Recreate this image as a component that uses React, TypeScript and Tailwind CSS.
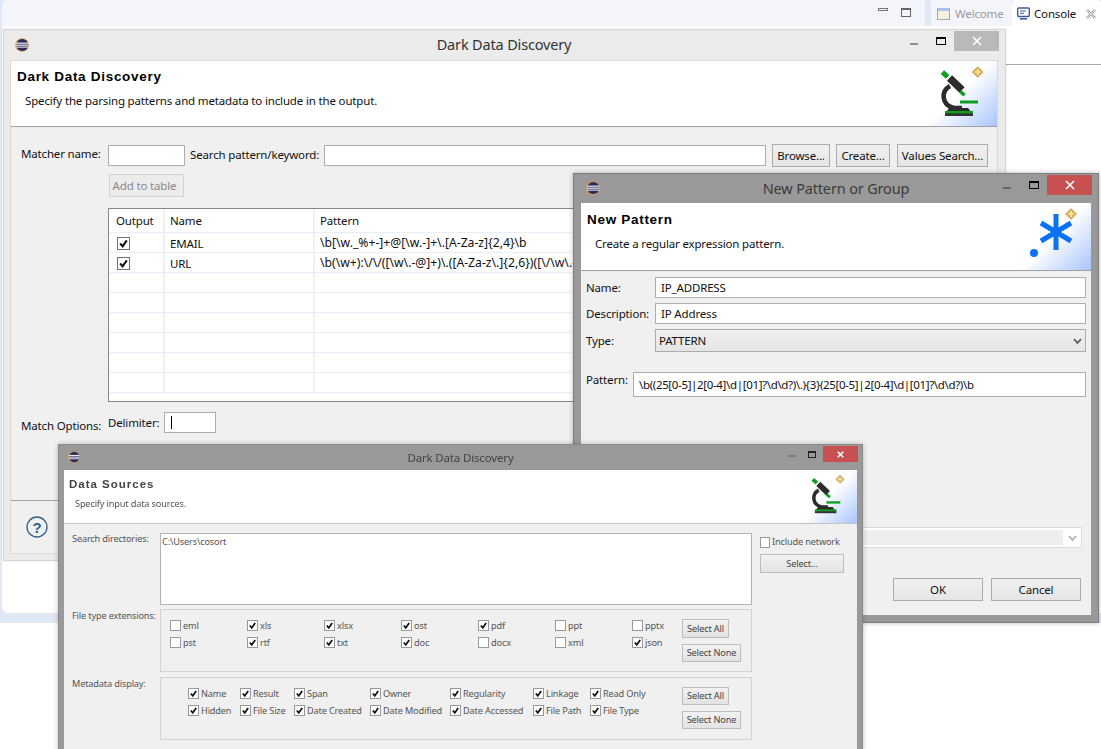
import React from "react";

const Eclipse = ({ s = 14 }: { s?: number }) => (
  <svg width={s} height={s} viewBox="0 0 14 14">
    <circle cx="7" cy="7" r="6.8" fill="#e8973a" />
    <circle cx="7.3" cy="7" r="6.1" fill="#2c2a5e" />
    <rect x="1" y="4.6" width="12.4" height="1.1" fill="#fff" />
    <rect x="0.9" y="6.6" width="12.6" height="1.1" fill="#fff" />
    <rect x="1.2" y="8.6" width="12" height="1" fill="#fff" />
  </svg>
);

const Diamond = ({ x, y }: { x: number; y: number }) => (
  <g transform={`translate(${x} ${y})`}>
    <path d="M0 -5.5 L5.5 0 L0 5.5 L-5.5 0 Z" fill="#d9b55a" stroke="#b8923c" strokeWidth="0.6" />
    <path d="M0 -3 V3 M-3 0 H3" stroke="#fff3c8" strokeWidth="1.2" />
  </g>
);

const Microscope = ({ className }: { className: string }) => (
  <svg className={className} viewBox="0 0 48 52">
    <rect x="1.5" y="5" width="7" height="5" transform="rotate(42 5 7.5)" fill="#0f9e1f" />
    <path d="M9.5 11 L22 23" stroke="#2c2c2c" strokeWidth="7.5" />
    <rect x="19.5" y="24.5" width="6" height="3.6" transform="rotate(42 22.5 26)" fill="#0f9e1f" />
    <path d="M10 19 C1 24 1 38 14 41 L22 41" fill="none" stroke="#2c2c2c" strokeWidth="4.6" />
    <rect x="20" y="33.5" width="18" height="3" fill="#0f9e1f" />
    <path d="M9 41 H28 L33 47 H5 Z" fill="#2c2c2c" />
    <rect x="5" y="44" width="28" height="2.6" fill="#0f9e1f" />
    <rect x="5" y="46.6" width="28" height="2.4" fill="#333" />
    <Diamond x={37.7} y={5} />
  </svg>
);

const Asterisk = () => (
  <svg className="absolute right-[10px] top-0 w-[70px] h-[66px]" viewBox="0 0 70 66">
    <path d="M45 11 V47 M30 20 L60 38 M60 20 L30 38" stroke="#0a72f5" strokeWidth="5" fill="none" />
    <circle cx="23" cy="50" r="4" fill="#0a72f5" />
    <Diamond x={60} y={11} />
  </svg>
);

const Corner = ({ w }: { w: string }) => (
  <div className={`absolute right-0 bottom-0 top-0 ${w} bg-[linear-gradient(135deg,#ffffff_50%,#a9c5fb_100%)]`} />
);

const Controls = ({ active, red }: { active?: boolean; red?: boolean }) => (
  <div className="absolute right-[-1px] top-[1px] flex items-start">
    <div className={`mt-[12px] mr-[18px] w-[8px] h-[2px] ${active ? "bg-[#8d8d8d]" : "bg-[#666]"}`} />
    <div className="mt-[6px] mr-[8px] w-[10px] h-[8px] border border-black border-t-2" />
    <div
      className={`w-[45px] h-[20px] flex items-center justify-center ${red ? "bg-[#c75050]" : "bg-[#b9b9b9]"}`}
    >
      <svg width="10" height="10" viewBox="0 0 10 10">
        <path d="M1 1 L9 9 M9 1 L1 9" stroke="#fff" strokeWidth="1.6" />
      </svg>
    </div>
  </div>
);

const Btn = ({ className, children }: { className: string; children: React.ReactNode }) => (
  <div
    className={`flex items-center justify-center border border-[#acacac] bg-[linear-gradient(#f0f0f0,#e5e5e5)] text-[11.5px] text-[#111] whitespace-nowrap ${className}`}
  >
    {children}
  </div>
);

const Cb = ({ on, size = "w-[13px] h-[13px]", tone = "border-[#707070]" }: { on?: boolean; size?: string; tone?: string }) => (
  <div className={`${size} shrink-0 border ${tone} bg-white flex items-center justify-center`}>
    {on && (
      <svg viewBox="0 0 10 10" className="w-full h-full">
        <path d="M2 5 L4.2 7.6 L8 2.2" fill="none" stroke="#111" strokeWidth="1.9" />
      </svg>
    )}
  </div>
);

const Input = ({ className, children }: { className: string; children?: React.ReactNode }) => (
  <div className={`flex items-center bg-white border border-[#abadb3] text-[11.5px] text-[#111] ${className}`}>
    {children}
  </div>
);

const SmallCheck = ({ on, label }: { on?: boolean; label: string }) => (
  <div className="flex items-center h-[17px] gap-[2px] whitespace-nowrap">
    <Cb on={on} size="w-[11px] h-[11px]" tone="border-[#999]" />
    <span>{label}</span>
  </div>
);

const SmallBtn = ({ className, children }: { className: string; children: React.ReactNode }) => (
  <div
    className={`flex items-center justify-center border border-[#bdbdbd] bg-[linear-gradient(#f2f2f2,#e3e3e3)] text-[9.2px] text-[#444] whitespace-nowrap ${className}`}
  >
    {children}
  </div>
);

const rows = [
  { out: true, name: "EMAIL", pat: "\\b[\\w._%+-]+@[\\w.-]+\\.[A-Za-z]{2,4}\\b" },
  { out: true, name: "URL", pat: "\\b(\\w+):\\/\\/([\\w\\.-@]+)\\.([A-Za-z\\.]{2,6})([\\/\\w\\.-]*)*\\/?\\b" },
  {},
  {},
  {},
  {},
  {},
  {},
] as { out?: boolean; name?: string; pat?: string }[];

function MainDialog() {
  return (
    <div className="absolute left-[3px] top-[29px] w-[1003px] h-[532px] bg-[#ebebeb] border border-[#d6d6d6] pl-[6px] pr-[7px] pb-[6px] flex flex-col shadow-[0_0_3px_rgba(0,0,0,0.1)]">
      <div className="relative h-[30px] shrink-0 flex items-center justify-center text-[14.5px] text-[#333]">
        <div className="absolute left-[5px] top-[8px]">
          <Eclipse />
        </div>
        <span>Dark Data Discovery</span>
        <Controls active />
      </div>
      <div className="flex-1 flex flex-col bg-[#f0f0f0] border border-[#d9d9d9] min-h-0">
        <div className="relative h-[66px] shrink-0 bg-white border-b border-[#a0a0a0] pl-[6px] pt-[7px]">
          <Corner w="w-[76px]" />
          <Microscope className="absolute right-[9px] top-[6px] w-[48px] h-[52px]" />
          <div className="relative font-bold text-[13.5px] tracking-[0.7px] text-black font-['Liberation_Sans',sans-serif] leading-[18px]">
            Dark Data Discovery
          </div>
          <div className="relative mt-[7px] ml-[8px] text-[11.5px] leading-[16px] text-[#111]">
            Specify the parsing patterns and metadata to include in the output.
          </div>
        </div>
        <div className="pl-[10px] pt-[17px] flex items-start h-[23px] box-content text-[11.5px]">
          <span className="w-[87px] leading-[18px] mt-[1px] text-[#111] whitespace-nowrap">Matcher name:</span>
          <Input className="w-[77px] h-[21px] mt-[1px]" />
          <span className="ml-[5px] w-[134px] leading-[20px] mt-[1px] text-[#111] whitespace-nowrap">
            Search pattern/keyword:
          </span>
          <Input className="w-[442px] h-[21px] mt-[1px]" />
          <Btn className="ml-[6px] w-[58px] h-[23px]">Browse...</Btn>
          <Btn className="ml-[6px] w-[54px] h-[23px]">Create...</Btn>
          <Btn className="ml-[7px] w-[91px] h-[23px]">Values Search...</Btn>
        </div>
        <div className="ml-[98px] mt-[7px] w-[75px] h-[23px] flex items-center justify-center pr-[4px] border border-[#d2d2d2] bg-[#ececec] text-[11.5px] text-[#8a8a8a] whitespace-nowrap">
          Add to table
        </div>
        <div className="ml-[97px] mt-[11px] w-[880px] h-[194px] bg-white border border-[#828790] overflow-hidden text-[11.5px] text-[#111]">
          <div className="flex h-[24px] items-center border-b border-[#e8eef6]">
            <span className="w-[56px] pl-[7px] border-r-2 border-[#eef2f8] leading-[27px]">Output</span>
            <span className="w-[150px] pl-[5px] border-r-2 border-[#eef2f8] leading-[27px]">Name</span>
            <span className="pl-[5px] leading-[27px]">Pattern</span>
          </div>
          {rows.map((r, i) => (
            <div key={i} className="flex h-[20px] items-center border-b border-[#e8eef6]">
              <div className="w-[56px] h-full pl-[8px] pt-[1px] border-r-2 border-[#eef2f8] flex items-center">
                {r.name && <Cb on={r.out} />}
              </div>
              <div className="w-[150px] h-full pl-[5px] border-r-2 border-[#eef2f8] leading-[21px]">{r.name}</div>
              <div className="pl-[5px] leading-[21px] whitespace-nowrap text-[12.2px] tracking-normal">{r.pat}</div>
            </div>
          ))}
        </div>
        <div className="pl-[10px] mt-[10px] flex items-start h-[22px] text-[11.5px] text-[#111]">
          <span className="w-[87px] mt-[6px] leading-[16px] whitespace-nowrap">Match Options:</span>
          <span className="w-[56px] mt-[1px] leading-[20px]">Delimiter:</span>
          <Input className="w-[52px] h-[21px] pl-[6px]">
            <span className="w-[1px] h-[13px] bg-black" />
          </Input>
        </div>
        <div className="mt-auto h-[53px] border-t border-[#a0a0a0] pl-[15px] pt-[15px]">
          <svg width="22" height="22" viewBox="0 0 22 22">
            <circle cx="11" cy="11" r="10" fill="none" stroke="#2f5f8f" strokeWidth="1.3" />
            <text
              x="11"
              y="16.5"
              textAnchor="middle"
              fontSize="15"
              fontWeight="700"
              fontFamily="Liberation Sans"
              fill="#2f5f8f"
            >
              ?
            </text>
          </svg>
        </div>
      </div>
    </div>
  );
}

function PatternDialog() {
  return (
    <div className="absolute left-[573px] top-[173px] w-[526px] h-[450px] bg-[#999] border border-[#7e7e7e] px-[7px] pb-[7px] flex flex-col shadow-[0_0_5px_rgba(0,0,0,0.25)]">
      <div className="relative h-[29px] shrink-0 flex items-center justify-center text-[14.5px] text-[#3c3c3c]">
        <div className="absolute left-[5px] top-[7px]">
          <Eclipse />
        </div>
        <span>New Pattern or Group</span>
        <Controls red />
      </div>
      <div className="flex-1 flex flex-col bg-[#f0f0f0] min-h-0 text-[11.5px] text-[#111]">
        <div className="relative h-[68px] shrink-0 bg-white border-b border-[#a0a0a0] pl-[6px] pt-[8px]">
          <Corner w="w-[76px]" />
          <Asterisk />
          <div className="relative font-bold text-[13.5px] tracking-[0.7px] text-black font-['Liberation_Sans',sans-serif] leading-[18px]">
            New Pattern
          </div>
          <div className="relative mt-[7px] ml-[8px] leading-[16px]">Create a regular expression pattern.</div>
        </div>
        <div className="pl-[5px] pr-[5px] pt-[6px] flex flex-col">
          <div className="flex items-center h-[21px]">
            <span className="w-[69px]">Name:</span>
            <Input className="flex-1 h-[21px] pl-[5px]">IP_ADDRESS</Input>
          </div>
          <div className="flex items-center h-[21px] mt-[5px]">
            <span className="w-[69px]">Description:</span>
            <Input className="flex-1 h-[21px] pl-[5px]">IP Address</Input>
          </div>
          <div className="flex items-center h-[23px] mt-[5px]">
            <span className="w-[69px]">Type:</span>
            <div className="relative flex-1 h-[23px] flex items-center pl-[3px] border border-[#acacac] bg-[linear-gradient(#f0f0f0,#e5e5e5)]">
              PATTERN
              <svg className="absolute right-[3px] top-[7px]" width="9" height="8" viewBox="0 0 9 8">
                <path d="M1 2 L4.5 6 L8 2" fill="none" stroke="#555" strokeWidth="1.8" />
              </svg>
            </div>
          </div>
          <div className="flex items-start h-[25px] mt-[20px]">
            <span className="w-[47px] leading-[16px]">Pattern:</span>
            <Input className="flex-1 h-[25px] pl-[5px] whitespace-nowrap tracking-[-0.34px]">
              {"\\b((25[0-5]|2[0-4]\\d|[01]?\\d\\d?)\\.){3}(25[0-5]|2[0-4]\\d|[01]?\\d\\d?)\\b"}
            </Input>
          </div>
          <div className="relative mt-[130px] h-[21px] bg-white border border-[#d9d9d9] mr-[4px] p-[2px] pr-[18px]">
            <div className="h-full bg-[#eeeeee]" />
            <svg className="absolute right-[4px] top-[6px]" width="9" height="8" viewBox="0 0 9 8">
              <path d="M1 2 L4.5 6 L8 2" fill="none" stroke="#aaa" strokeWidth="1.6" />
            </svg>
          </div>
        </div>
        <div className="flex justify-end pr-[10px] gap-[8px] mt-[30px]">
          <Btn className="w-[90px] h-[23px]">OK</Btn>
          <Btn className="w-[90px] h-[23px]">Cancel</Btn>
        </div>
      </div>
    </div>
  );
}

function SourcesDialog() {
  const ft: [string, boolean][] = [
    ["eml", false], ["xls", true], ["xlsx", true], ["ost", true], ["pdf", true], ["ppt", false], ["pptx", false],
    ["pst", false], ["rtf", true], ["txt", true], ["doc", true], ["docx", false], ["xml", false], ["json", true],
  ];
  const md = [
    "Name", "Result", "Span", "Owner", "Regularity", "Linkage", "Read Only",
    "Hidden", "File Size", "Date Created", "Date Modified", "Date Accessed", "File Path", "File Type",
  ];
  return (
    <div className="absolute left-[58px] top-[444px] w-[805px] h-[320px] bg-[#999] border-t border-x border-[#8a8a8a] px-[5px] flex flex-col blur-[0.45px] text-[9.2px] text-[#555] shadow-[0_0_5px_rgba(0,0,0,0.25)]">
      <div className="relative h-[25px] shrink-0 flex items-center justify-center text-[11.5px] text-[#444]">
        <div className="absolute left-[4px] top-[6px]">
          <Eclipse s={12} />
        </div>
        <span>Dark Data Discovery</span>
        <div className="absolute right-[-1px] top-[1px] flex items-start">
          <div className="mt-[9px] mr-[13px] w-[6px] h-[2px] bg-[#777]" />
          <div className="mt-[5px] mr-[7px] w-[8px] h-[7px] border border-[#222] border-t-2" />
          <div className="w-[35px] h-[16px] bg-[#c75050] flex items-center justify-center">
            <svg width="7" height="7" viewBox="0 0 10 10">
              <path d="M1 1 L9 9 M9 1 L1 9" stroke="#fff" strokeWidth="2.2" />
            </svg>
          </div>
        </div>
      </div>
      <div className="flex-1 bg-[#f0f0f0] min-h-0 flex flex-col">
        <div className="relative h-[54px] shrink-0 bg-white border-b border-[#c4c4c4] pl-[5px] pt-[7px]">
          <Corner w="w-[60px]" />
          <Microscope className="absolute right-[9px] top-[5px] w-[37px] h-[41px]" />
          <div className="relative font-bold text-[11.5px] tracking-[1px] text-[#444] font-['Liberation_Sans',sans-serif] leading-[14px]">
            Data Sources
          </div>
          <div className="relative mt-[6px] ml-[6px] leading-[13px]">Specify input data sources.</div>
        </div>
        <div className="flex pl-[8px] pt-[9px]">
          <div className="w-[88px] leading-[12px]">Search directories:</div>
          <div className="w-[592px] h-[72px] bg-white border border-[#b4b4b4] pl-[1px] pt-[1px] leading-[13px]">
            {"C:\\Users\\cosort"}
          </div>
          <div className="ml-[8px] pt-[3px] w-[84px]">
            <div className="flex items-center gap-[2px] h-[12px] whitespace-nowrap">
              <Cb size="w-[10px] h-[11px]" tone="border-[#999]" />
              <span>Include network</span>
            </div>
            <SmallBtn className="mt-[6px] h-[19px]">Select...</SmallBtn>
          </div>
        </div>
        <div className="flex pl-[8px] mt-[4px]">
          <div className="w-[88px] leading-[12px] mt-[1px] whitespace-nowrap">File type extensions:</div>
          <div className="relative w-[592px] h-[63px] border border-[#d4d4d4] flex pl-[9px] pt-[7px]">
            <div className="grid grid-cols-[77px_77px_77px_77px_77px_77px_50px] w-[512px] auto-rows-[17px]">
              {ft.map(([l, on]) => (
                <SmallCheck key={l} label={l} on={on} />
              ))}
            </div>
            <div className="flex flex-col pt-[2px]">
              <SmallBtn className="w-[47px] h-[19px]">Select All</SmallBtn>
              <SmallBtn className="w-[59px] h-[18px] mt-[6px]">Select None</SmallBtn>
            </div>
          </div>
        </div>
        <div className="flex pl-[8px] mt-[5px]">
          <div className="w-[88px] leading-[12px] mt-[1px]">Metadata display:</div>
          <div className="relative w-[592px] h-[63px] border border-[#d4d4d4] flex pl-[27px] pt-[7px]">
            <div className="grid grid-cols-[52px_54px_76px_80px_83px_57px_93px] w-[494px] auto-rows-[17px]">
              {md.map((l) => (
                <SmallCheck key={l} label={l} on />
              ))}
            </div>
            <div className="flex flex-col pt-[2px]">
              <SmallBtn className="w-[47px] h-[18px]">Select All</SmallBtn>
              <SmallBtn className="w-[59px] h-[18px] mt-[6px]">Select None</SmallBtn>
            </div>
          </div>
        </div>
      </div>
    </div>
  );
}

export default function App() {
  return (
    <div className="relative w-[1101px] h-[749px] overflow-hidden bg-white font-['Noto_Sans',sans-serif] tracking-[-0.16px]">
      <div className="h-[623px] w-full bg-[#e1e8f5] flex flex-col">
        <div className="flex h-[26px] shrink-0 pl-[2px] text-[11.5px] leading-[15px]">
          <div className="relative w-[923px] bg-[#f3f5fb] rounded-tl-md">
            <div className="absolute left-[876px] top-[8px] w-[10px] h-[3px] border border-[#777]" />
            <div className="absolute left-[899px] top-[8px] w-[10px] h-[9px] border border-[#666] border-t-2" />
          </div>
          <div className="w-[6px]" />
          <div className="flex w-[81px] items-center bg-[#f3f5fb] pl-[6px] gap-[5px] text-[#999] pt-[1px]">
            <div className="w-[13px] h-[12px] border border-[#9aa] border-t-[3px] border-t-[#a9c4ec] bg-[#f5f0e0]" />
            Welcome
          </div>
          <div className="flex-1 flex items-center bg-white pl-[5px] gap-[4px] rounded-t-sm text-[#111] pt-[1px]">
            <svg width="13" height="13" viewBox="0 0 13 13">
              <rect x="0.7" y="1" width="11.6" height="8.5" rx="1" fill="#fff" stroke="#3a5f9a" strokeWidth="1.4" />
              <path d="M3 4 H9 M3 6.3 H7" stroke="#3a5f9a" />
              <rect x="3" y="11" width="7" height="1.6" fill="#3a5f9a" />
            </svg>
            <span>Console</span>
            <svg className="ml-[6px]" width="10" height="10" viewBox="0 0 10 10">
              <path d="M1 1 L9 9 M9 1 L1 9" stroke="#999" strokeWidth="2.4" />
              <path d="M1 1 L9 9 M9 1 L1 9" stroke="#fff" strokeWidth="0.8" />
            </svg>
          </div>
        </div>
        <div className="flex-1 flex flex-col">
          <div className="h-[587px] shrink-0 ml-[2px] bg-white rounded-bl-md">
            <div className="ml-auto w-[95px] h-[39px] border-b border-[#a9a9a9]" />
          </div>
        </div>
      </div>
      <MainDialog />
      <PatternDialog />
      <SourcesDialog />
    </div>
  );
}
